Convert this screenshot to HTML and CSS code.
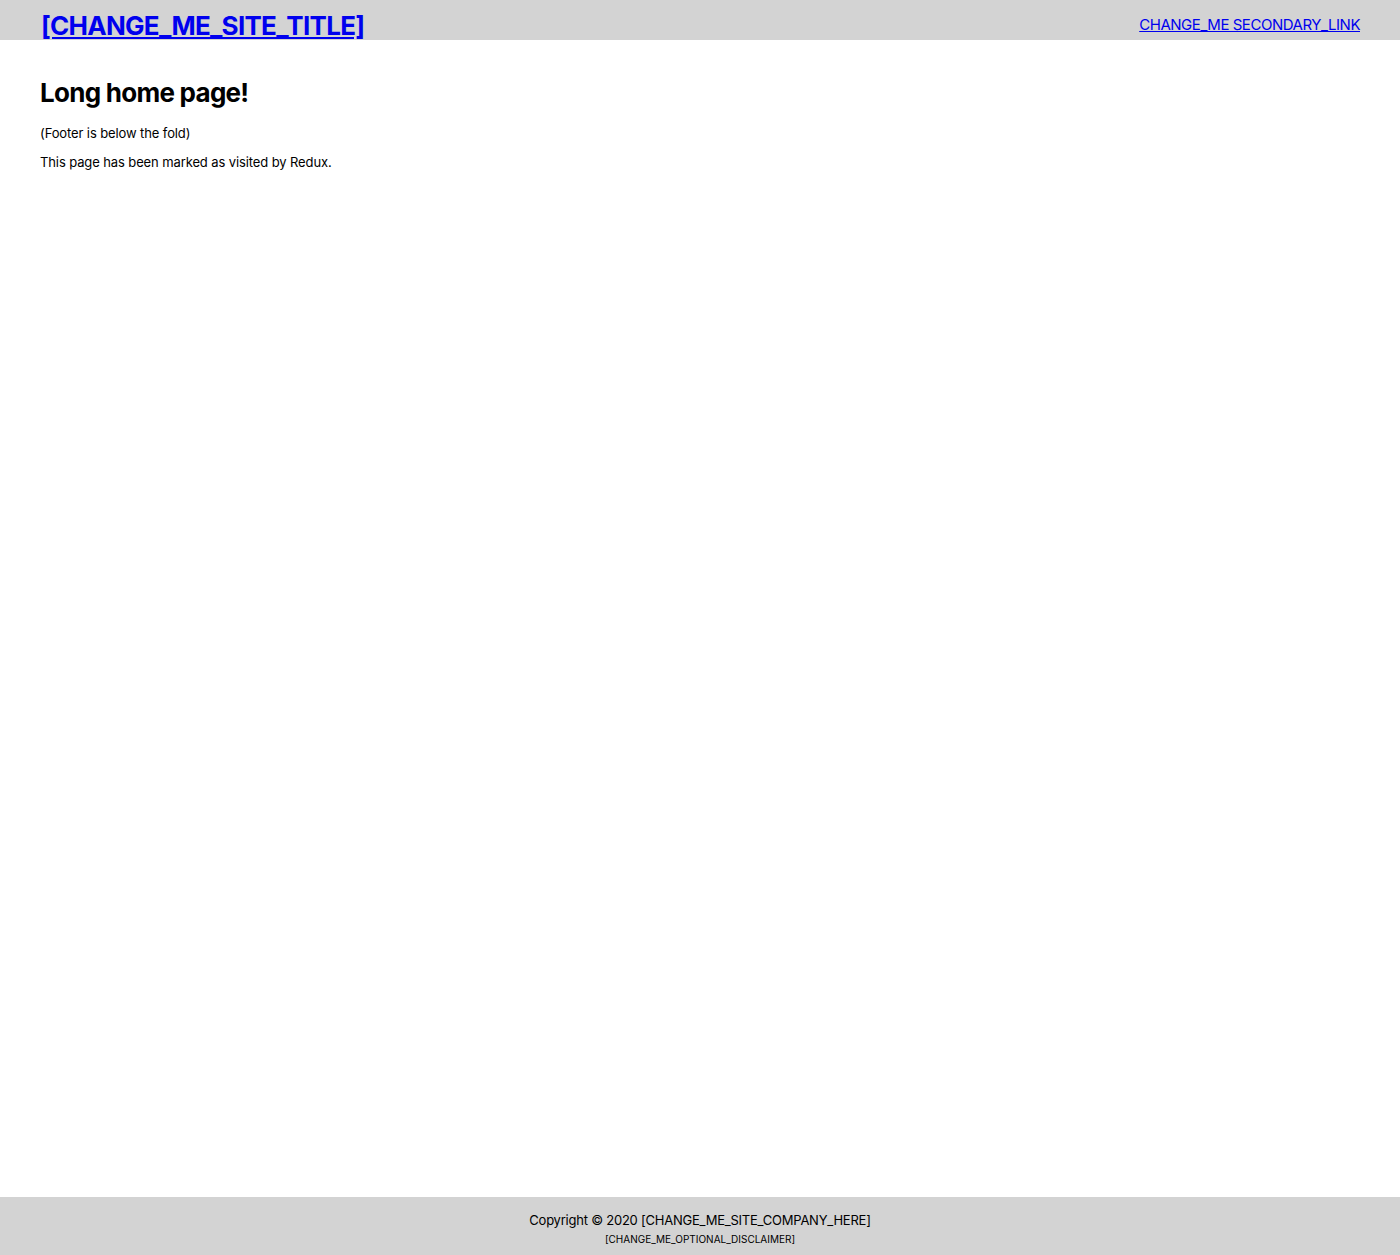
FILE: index.html
```html
<!DOCTYPE html>
<html>
<head>
<meta charset="utf-8">
<title>Long home page</title>
<link rel="stylesheet" href="styles.css">
</head>
<body>
<div class="page">
  <header class="site-header">
    <a class="site-title" href="#">[CHANGE_ME_SITE_TITLE]</a>
    <a class="secondary-link" href="#">CHANGE_ME SECONDARY_LINK</a>
  </header>
  <main class="content">
    <h1 class="page-title">Long home page!</h1>
    <p class="text first">(Footer is below the fold)</p>
    <p class="text">This page has been marked as visited by Redux.</p>
  </main>
  <footer class="site-footer">
    <div class="copyright">Copyright © 2020 [CHANGE_ME_SITE_COMPANY_HERE]</div>
    <div class="disclaimer">[CHANGE_ME_OPTIONAL_DISCLAIMER]</div>
  </footer>
</div>
</body>
</html>
```
FILE: styles.css
```css
html, body {
  margin: 0;
  padding: 0;
}
body {
  font-family: Inter, "Liberation Sans", sans-serif;
  color: #000;
  background: #fff;
}
.page {
  min-height: 1255px;
  display: flex;
  flex-direction: column;
}
.site-header {
  height: 40px;
  background: #d3d3d3;
  display: flex;
  justify-content: space-between;
  align-items: flex-start;
  padding: 0 40px 0 41px;
}
.site-title {
  margin-top: 10px;
  font-size: 26px;
  font-weight: 700;
  letter-spacing: -0.73px;
  color: #0000ee;
  text-decoration: underline;
  line-height: normal;
}
.secondary-link {
  margin-top: 15px;
  font-size: 15px;
  letter-spacing: -0.46px;
  color: #0000ee;
  text-decoration: underline;
  line-height: normal;
}
.content {
  flex: 1;
  padding: 0 40px;
}
.page-title {
  font-size: 26px;
  font-weight: 700;
  letter-spacing: -0.73px;
  margin: 37px 0 0;
  line-height: normal;
}
.text {
  font-size: 13px;
  letter-spacing: -0.11px;
  margin: 13px 0 0;
  line-height: normal;
}
.text.first {
  margin-top: 17px;
}
.site-footer {
  background: #d3d3d3;
  height: 58px;
  box-sizing: border-box;
  padding-top: 15px;
  text-align: center;
}
.copyright {
  font-size: 13px;
  letter-spacing: -0.23px;
  line-height: normal;
}
.disclaimer {
  font-size: 10px;
  margin-top: 5px;
  line-height: normal;
}
```
